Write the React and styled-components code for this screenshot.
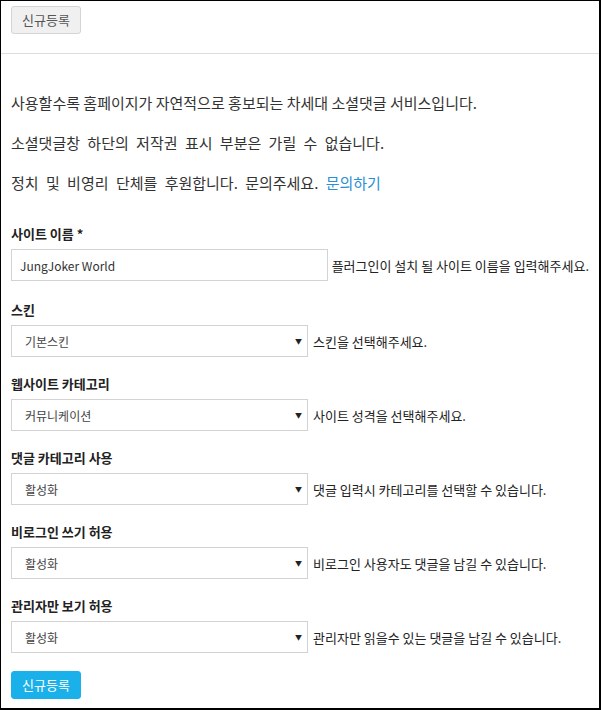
import React from "react";
import styled, { createGlobalStyle } from "styled-components";

const Global = createGlobalStyle`
  html, body { margin: 0; padding: 0; background: #fff; }
  body { font-family: "Noto Sans CJK KR", "Noto Sans", sans-serif; color: #333; }
  * { box-sizing: border-box; }
`;

const Frame = styled.div`
  width: 601px;
  height: 710px;
  border-style: solid;
  border-color: #000;
  border-width: 1px 2px 2px 1px;
  overflow: hidden;
`;

const TopBar = styled.div`
  height: 53px;
  padding: 5px 10px 0;
  border-bottom: 1px solid #ddd;
`;

const Button = styled.button`
  height: 28px;
  width: 70px;
  padding: 0;
  border-radius: 3px;
  font-family: inherit;
  font-size: 13px;
  line-height: 26px;
  cursor: pointer;
  border: 1px solid ${(p) => (p.$primary ? "#1ab1ea" : "#d4d4d4")};
  background: ${(p) => (p.$primary ? "#1ab1ea" : "#f0f0f0")};
  color: ${(p) => (p.$primary ? "#fff" : "#555")};
`;

const Content = styled.div`
  padding: 38px 10px 0;
`;

const Para = styled.p`
  margin: 0 0 ${(p) => (p.$last ? 0 : 18)}px;
  font-size: 15px;
  line-height: 22px;
  color: #333;
  word-spacing: ${(p) => (p.$wide ? 4 : 0)}px;
`;

const Link = styled.a`
  color: #2a8fd4;
  text-decoration: none;
`;

const Form = styled.div`
  margin-top: 30px;
  display: flex;
  flex-direction: column;
`;

const Group = styled.div`
  margin-bottom: ${(p) => p.$mb || 19}px;
`;

const Label = styled.div`
  font-size: 13px;
  font-weight: 700;
  line-height: 20px;
  color: #222;
  margin-bottom: 5px;
`;

const Row = styled.div`
  display: flex;
  align-items: center;
`;

const TextInput = styled.input`
  width: 318px;
  height: 32px;
  border: 1px solid #d3d3d3;
  padding: 0 8px;
  font-family: inherit;
  font-size: 12px;
  color: #333;
  outline: none;
`;

const SelectWrap = styled.div`
  position: relative;
  width: 297px;
  height: 32px;
`;

const Select = styled.select`
  appearance: none;
  -webkit-appearance: none;
  width: 100%;
  height: 100%;
  border: 1px solid #d3d3d3;
  border-radius: 0;
  background: #fff;
  padding: 0 0 0 13px;
  font-family: inherit;
  font-size: 12px;
  color: #444;
  outline: none;
`;

const Arrow = styled.span`
  position: absolute;
  right: 6px;
  top: 50%;
  transform: translateY(-50%);
  font-size: 7px;
  color: #222;
  pointer-events: none;
`;

const Help = styled.span`
  margin-left: ${(p) => p.$ml || 4}px;
  font-size: 13px;
  color: #222;
  white-space: nowrap;
`;

const selects = [
  { label: "스킨", value: "기본스킨", help: "스킨을 선택해주세요." },
  { label: "웹사이트 카테고리", value: "커뮤니케이션", help: "사이트 성격을 선택해주세요." },
  { label: "댓글 카테고리 사용", value: "활성화", help: "댓글 입력시 카테고리를 선택할 수 있습니다." },
  { label: "비로그인 쓰기 허용", value: "활성화", help: "비로그인 사용자도 댓글을 남길 수 있습니다." },
  { label: "관리자만 보기 허용", value: "활성화", help: "관리자만 읽을수 있는 댓글을 남길 수 있습니다." },
];

export default function App() {
  return (
    <Frame>
      <Global />
      <TopBar>
        <Button>신규등록</Button>
      </TopBar>
      <Content>
        <Para>사용할수록 홈페이지가 자연적으로 홍보되는 차세대 소셜댓글 서비스입니다.</Para>
        <Para $wide>소셜댓글창 하단의 저작권 표시 부분은 가릴 수 없습니다.</Para>
        <Para $wide $last>
          정치 및 비영리 단체를 후원합니다. 문의주세요. <Link href="#">문의하기</Link>
        </Para>
        <Form>
          <Group $mb={19}>
            <Label>사이트 이름 *</Label>
            <Row>
              <TextInput defaultValue="JungJoker World" />
              <Help $ml={4}>플러그인이 설치 될 사이트 이름을 입력해주세요.</Help>
            </Row>
          </Group>
          {selects.map((s, i) => (
            <Group key={i} $mb={i === selects.length - 1 ? 18 : 17}>
              <Label>{s.label}</Label>
              <Row>
                <SelectWrap>
                  <Select defaultValue={s.value}>
                    <option>{s.value}</option>
                  </Select>
                  <Arrow>▼</Arrow>
                </SelectWrap>
                <Help $ml={5}>{s.help}</Help>
              </Row>
            </Group>
          ))}
          <div>
            <Button $primary>신규등록</Button>
          </div>
        </Form>
      </Content>
    </Frame>
  );
}
